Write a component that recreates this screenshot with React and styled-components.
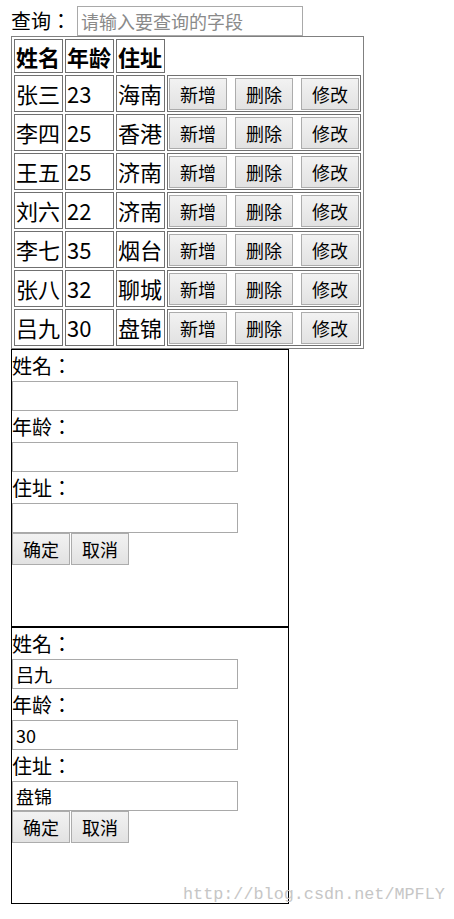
import React from "react";
import styled, { createGlobalStyle } from "styled-components";

const GlobalStyle = createGlobalStyle`
  body {
    margin: 0;
    background: #fff;
    font-family: "Noto Sans CJK SC", "Noto Sans", sans-serif;
    color: #000;
  }
`;

const Page = styled.div`
  position: relative;
  width: 454px;
  height: 919px;
  padding: 6px 0 0 11px;
  box-sizing: border-box;
  overflow: hidden;
`;

const SearchRow = styled.div`
  display: flex;
  align-items: center;
  height: 30px;
`;

const SearchLabel = styled.span`
  font-family: "Noto Sans CJK TC", "Noto Sans CJK SC", sans-serif;
  font-size: 20px;
  line-height: 30px;
`;

const TextInput = styled.input`
  display: block;
  box-sizing: border-box;
  width: 226px;
  height: 30px;
  margin: 0;
  padding: 0 3px;
  border: 1px solid #a9a9a9;
  font-family: "Noto Sans CJK SC", "Liberation Sans", sans-serif;
  font-size: 18px;
  color: #000;
  outline: none;

  &::placeholder {
    color: #8a8a8a;
  }
`;

const SearchInput = styled(TextInput)`
  margin-left: 6px;
`;

const Table = styled.table`
  border-collapse: separate;
  border-spacing: 2px;
  border: 1px solid #808080;
`;

const HeadCell = styled.th`
  border: 1px solid #707070;
  padding: 0 2px 0 1px;
  font-size: 22px;
  font-weight: 700;
  line-height: 32px;
  text-align: left;
`;

const Cell = styled.td`
  border: 1px solid #707070;
  padding: 0 2px 0 1px;
  font-size: 22px;
  line-height: 35px;
  vertical-align: middle;
  white-space: nowrap;
`;

const ActionCell = styled.td`
  border: 1px solid #707070;
  padding: 0 1px;
  vertical-align: middle;
`;

const ActionBar = styled.div`
  display: flex;
  align-items: center;
  gap: 8px;
  height: 35px;
`;

const Button = styled.button`
  box-sizing: border-box;
  width: 58px;
  height: 32px;
  margin: 0;
  padding: 0;
  border: 1px solid #acacac;
  border-radius: 0;
  background: linear-gradient(#f2f2f2, #e2e2e2);
  font-family: "Noto Sans CJK SC", sans-serif;
  font-size: 18px;
  line-height: 30px;
  color: #000;
`;

const FormBox = styled.div`
  width: 278px;
  height: 278px;
  box-sizing: border-box;
  border: 1px solid #000;
  & + & {
    margin-top: -1px;
    border-top-width: 2px;
  }
`;

const FieldLabel = styled.div`
  font-family: "Noto Sans CJK TC", "Noto Sans CJK SC", sans-serif;
  font-size: 20px;
  line-height: 31px;
  height: 31px;
`;

const FormButtons = styled.div`
  display: flex;
  gap: 1px;
`;

const Watermark = styled.div`
  position: absolute;
  left: 183px;
  top: 885px;
  font-family: "Liberation Mono", "DejaVu Sans Mono", monospace;
  font-size: 16.8px;
  color: #c6c6c6;
  white-space: nowrap;
  pointer-events: none;
`;

const people = [
  { name: "张三", age: 23, addr: "海南" },
  { name: "李四", age: 25, addr: "香港" },
  { name: "王五", age: 25, addr: "济南" },
  { name: "刘六", age: 22, addr: "济南" },
  { name: "李七", age: 35, addr: "烟台" },
  { name: "张八", age: 32, addr: "聊城" },
  { name: "吕九", age: 30, addr: "盘锦" },
];

const PersonForm = ({ values = {} }) => (
  <FormBox>
    <FieldLabel>姓名：</FieldLabel>
    <TextInput defaultValue={values.name} />
    <FieldLabel>年龄：</FieldLabel>
    <TextInput defaultValue={values.age} />
    <FieldLabel>住址：</FieldLabel>
    <TextInput defaultValue={values.addr} />
    <FormButtons>
      <Button>确定</Button>
      <Button>取消</Button>
    </FormButtons>
  </FormBox>
);

export default function App() {
  return (
    <Page>
      <GlobalStyle />
      <SearchRow>
        <SearchLabel>查询：</SearchLabel>
        <SearchInput placeholder="请输入要查询的字段" />
      </SearchRow>
      <Table>
        <thead>
          <tr>
            <HeadCell>姓名</HeadCell>
            <HeadCell>年龄</HeadCell>
            <HeadCell>住址</HeadCell>
          </tr>
        </thead>
        <tbody>
          {people.map((p) => (
            <tr key={p.name}>
              <Cell>{p.name}</Cell>
              <Cell>{p.age}</Cell>
              <Cell>{p.addr}</Cell>
              <ActionCell>
                <ActionBar>
                  <Button>新增</Button>
                  <Button>删除</Button>
                  <Button>修改</Button>
                </ActionBar>
              </ActionCell>
            </tr>
          ))}
        </tbody>
      </Table>
      <PersonForm />
      <PersonForm values={{ name: "吕九", age: "30", addr: "盘锦" }} />
      <Watermark>http://blog.csdn.net/MPFLY</Watermark>
    </Page>
  );
}
